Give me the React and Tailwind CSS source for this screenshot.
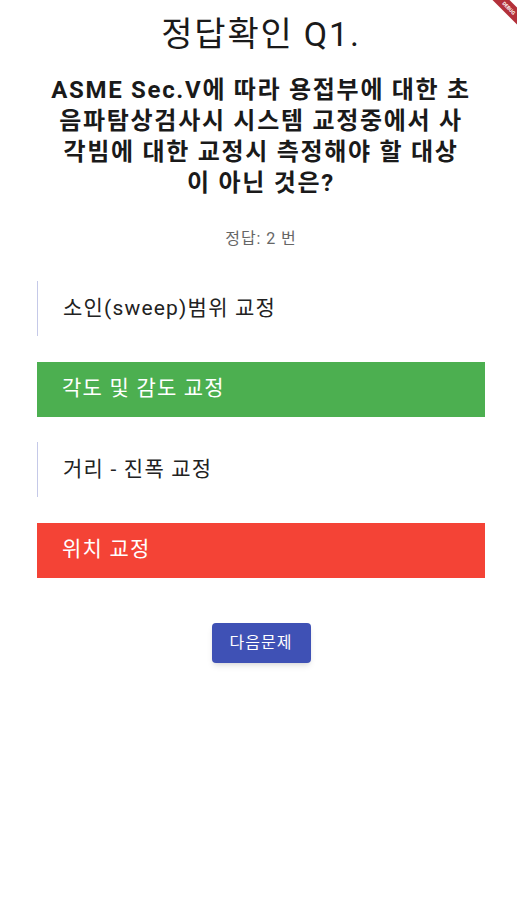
import React from 'react';

const options = [
  { text: '소인(sweep)범위 교정', state: 'none' },
  { text: '각도 및 감도 교정', state: 'correct' },
  { text: '거리 - 진폭 교정', state: 'none' },
  { text: '위치 교정', state: 'wrong' },
];

const questionLines = [
  'ASME Sec.V에 따라 용접부에 대한 초',
  '음파탐상검사시 시스템 교정중에서 사',
  '각빔에 대한 교정시 측정해야 할 대상',
  '이 아닌 것은?',
];

const font = { fontFamily: 'Roboto, "Noto Sans CJK KR", sans-serif' };

export default function App() {
  return (
    <div className="relative min-h-[900px] w-full bg-white overflow-hidden" style={font}>
      {/* debug banner */}
      <div className="absolute top-0 right-0 w-[40px] h-[40px] overflow-hidden">
        <div className="absolute left-[-8px] top-[2px] w-[80px] h-[12px] rotate-45 bg-[#b3303a] flex items-center justify-center">
          <span className="text-[5px] font-bold text-white leading-none">DEBUG</span>
        </div>
      </div>

      <div className="flex flex-col items-center pt-[14px] pl-[5px]">
        <h1 className="h-[40px] text-[34px] leading-[40px] tracking-[1.8px] text-[#1a1a1a]">정답확인 Q1.</h1>

        <div className="mt-[21px] flex flex-col items-center">
          {questionLines.map((l) => (
            <div key={l} className="h-[31px] text-[24px] leading-[31px] font-bold tracking-[1.7px] text-[#1a1a1a] whitespace-nowrap">
              {l}
            </div>
          ))}
        </div>

        <p className="mt-[30px] h-[20px] text-[16px] leading-[20px] tracking-[0.9px] text-[#666666]">정답: 2 번</p>
      </div>

      <div className="mt-[32px] ml-[37px] mr-[32px] flex flex-col gap-[25.5px]">
        {options.map((o) => (
          <div
            key={o.text}
            className={
              o.state === 'correct'
                ? 'h-[55px] flex items-center pl-[25px] bg-[#4caf50] text-white text-[21px] tracking-[1.2px]'
                : o.state === 'wrong'
                ? 'h-[55px] flex items-center pl-[25px] bg-[#f44336] text-white text-[21px] tracking-[1.2px]'
                : 'h-[55px] flex items-center pl-[25px] border-l border-[#c5c9e8] text-[#222222] text-[21px] tracking-[1.2px]'
            }
          >
            {o.text}
          </div>
        ))}
      </div>

      <div className="mt-[45px] flex justify-center pl-[5px]">
        <button className="w-[99px] h-[40px] rounded-[4px] bg-[#3f51b5] text-white text-[16px] tracking-[1px] shadow-md">
          다음문제
        </button>
      </div>
    </div>
  );
}
